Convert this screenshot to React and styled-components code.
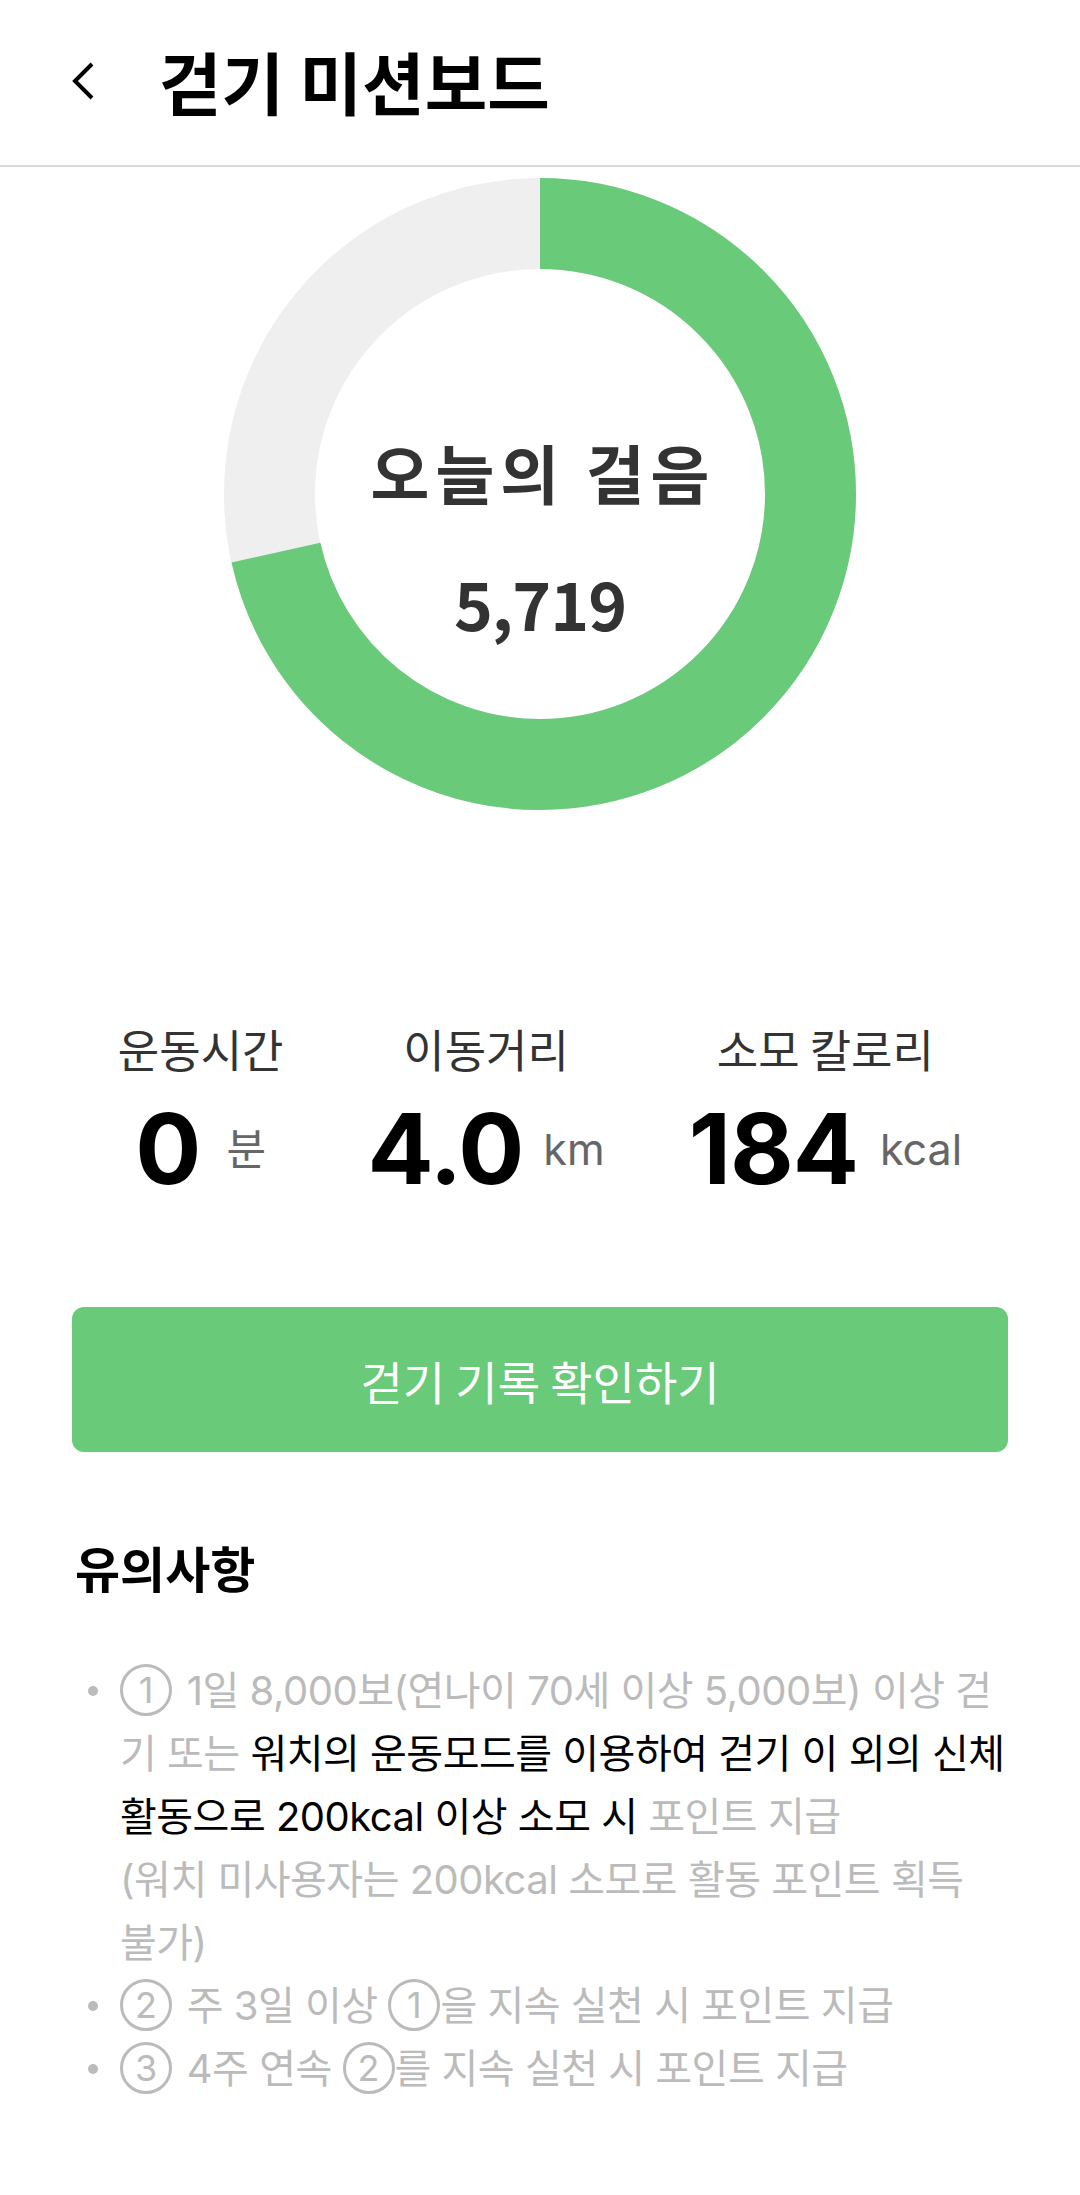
import React from "react";
import styled, { createGlobalStyle } from "styled-components";

const KR = `"Noto Sans CJK KR", "Noto Sans", sans-serif`;
const MIX = `Inter, "Noto Sans CJK KR", sans-serif`;

const GREEN = "#69ca79";
const GRAY_TEXT = "#bbbbbb";

const Global = createGlobalStyle`
  html, body { margin: 0; padding: 0; background: #ffffff; }
  body { font-family: ${KR}; -webkit-font-smoothing: antialiased; }
  * { box-sizing: border-box; }
`;

const Page = styled.div`
  width: 1080px;
  min-height: 2195px;
  background: #ffffff;
  display: flex;
  flex-direction: column;
`;

const Header = styled.header`
  height: 167px;
  display: flex;
  align-items: center;
  gap: 64px;
  padding: 0 0 4px 71px;
  border-bottom: 2px solid #d9d9d9;
`;

const BackButton = styled.button`
  border: 0;
  background: none;
  padding: 0;
  width: 24px;
  height: 40px;
  display: flex;
  cursor: pointer;
`;

const Title = styled.h1`
  margin: 0;
  font-family: ${KR};
  font-size: 68px;
  line-height: 1;
  font-weight: 700;
  color: #000000;
`;

const Main = styled.main`
  display: flex;
  flex-direction: column;
  align-items: center;
  padding: 11px 72px 0;
`;

const Donut = styled.section`
  position: relative;
  width: 632px;
  height: 632px;
`;

const Ring = styled.svg`
  position: absolute;
  inset: 0;
`;

const DonutText = styled.div`
  position: relative;
  height: 100%;
  display: flex;
  flex-direction: column;
  align-items: center;
  padding-top: 261px;
  gap: 66px;
  color: #333333;
  font-family: ${KR};
  font-weight: 700;
`;

const DonutLabel = styled.div`
  font-size: 64px;
  line-height: 1;
  letter-spacing: 6px;
  padding-left: 6px;
`;

const DonutValue = styled.div`
  font-size: 66px;
  line-height: 1;
  letter-spacing: -1px;
`;

const Stats = styled.section`
  display: flex;
  justify-content: center;
  gap: 84px;
  margin-top: 218px;
`;

const Stat = styled.div`
  display: flex;
  flex-direction: column;
  align-items: center;
  gap: 30px;
`;

const StatLabel = styled.div`
  font-family: ${KR};
  font-size: 45px;
  line-height: 42px;
  color: #333333;
`;

const StatValueRow = styled.div`
  display: flex;
  align-items: center;
  gap: ${(p) => p.$gap}px;
`;

const StatValue = styled.span`
  font-family: ${MIX};
  font-size: 98px;
  line-height: 1;
  font-weight: 700;
  color: #000000;
  letter-spacing: -1px;
`;

const StatUnit = styled.span`
  font-family: ${MIX};
  font-size: 43px;
  line-height: 1;
  color: #666666;
`;

const PrimaryButton = styled.button`
  margin-top: 109px;
  width: 936px;
  height: 145px;
  border: 0;
  border-radius: 12px;
  background: ${GREEN};
  color: #ffffff;
  font-family: ${KR};
  font-size: 46px;
  cursor: pointer;
`;

const Notice = styled.section`
  align-self: stretch;
  margin-top: 93px;
`;

const NoticeTitle = styled.h2`
  margin: 0 0 0 3px;
  font-family: ${KR};
  font-size: 49px;
  line-height: 44px;
  font-weight: 700;
  color: #000000;
`;

const List = styled.ul`
  list-style: none;
  margin: 70px 0 0;
  padding: 0;
`;

const Item = styled.li`
  display: flex;
  align-items: flex-start;
  gap: 22px;
  padding-left: 16px;
`;

const Dot = styled.span`
  flex: none;
  width: 10px;
  height: 10px;
  margin-top: 27px;
  border-radius: 50%;
  background: ${GRAY_TEXT};
`;

const ItemText = styled.p`
  margin: 0;
  flex: 1;
  font-family: ${MIX};
  font-size: 40px;
  line-height: 63px;
  letter-spacing: -0.5px;
  color: ${GRAY_TEXT};
`;

const Strong = styled.span`
  color: #000000;
`;

const Circled = styled.span`
  display: inline-flex;
  align-items: center;
  justify-content: center;
  width: 52px;
  height: 52px;
  margin-right: ${(p) => (p.$tight ? "4px" : "0")};
  border: 3px solid ${GRAY_TEXT};
  border-radius: 50%;
  font-family: ${MIX};
  font-size: 36px;
  line-height: 1;
  letter-spacing: 0;
  vertical-align: 2px;
`;

function ChevronLeft() {
  return (
    <svg width="24" height="40" viewBox="0 0 24 40" fill="none">
      <polyline
        points="21,3 4,20 21,37"
        stroke="#000"
        strokeWidth="4"
        strokeLinecap="butt"
        strokeLinejoin="miter"
      />
    </svg>
  );
}

function StepRing({ steps, goal }) {
  const r = 270.5;
  const c = 2 * Math.PI * r;
  const ratio = Math.min(steps / goal, 1);
  return (
    <Ring width="632" height="632" viewBox="0 0 632 632">
      <circle cx="316" cy="316" r={r} fill="none" stroke="#efefef" strokeWidth="91" />
      <circle
        cx="316"
        cy="316"
        r={r}
        fill="none"
        stroke={GREEN}
        strokeWidth="91"
        strokeDasharray={`${c * ratio} ${c}`}
        transform="rotate(-90 316 316)"
      />
    </Ring>
  );
}

const stats = [
  { label: "운동시간", value: "0", unit: "분", gap: 26 },
  { label: "이동거리", value: "4.0", unit: "km", gap: 20 },
  { label: "소모 칼로리", value: "184", unit: "kcal", gap: 22 },
];

export default function App() {
  return (
    <Page>
      <Global />
      <Header>
        <BackButton aria-label="뒤로가기">
          <ChevronLeft />
        </BackButton>
        <Title>걷기 미션보드</Title>
      </Header>
      <Main>
        <Donut>
          <StepRing steps={5719} goal={8000} />
          <DonutText>
            <DonutLabel>오늘의 걸음</DonutLabel>
            <DonutValue>5,719</DonutValue>
          </DonutText>
        </Donut>

        <Stats>
          {stats.map((s) => (
            <Stat key={s.label}>
              <StatLabel>{s.label}</StatLabel>
              <StatValueRow $gap={s.gap}>
                <StatValue>{s.value}</StatValue>
                <StatUnit>{s.unit}</StatUnit>
              </StatValueRow>
            </Stat>
          ))}
        </Stats>

        <PrimaryButton>걷기 기록 확인하기</PrimaryButton>

        <Notice>
          <NoticeTitle>유의사항</NoticeTitle>
          <List>
            <Item>
              <Dot />
              <ItemText>
                <Circled $tight>1</Circled> 1일 8,000보(연나이 70세 이상 5,000보) 이상 걷기 또는{" "}
                <Strong>워치의 운동모드를 이용하여 걷기 이 외의 신체 활동으로 200kcal 이상 소모 시</Strong>{" "}
                포인트 지급
                <br />
                (워치 미사용자는 200kcal 소모로 활동 포인트 획득 불가)
              </ItemText>
            </Item>
            <Item>
              <Dot />
              <ItemText>
                <Circled $tight>2</Circled> 주 3일 이상 <Circled>1</Circled>을 지속 실천 시 포인트 지급
              </ItemText>
            </Item>
            <Item>
              <Dot />
              <ItemText>
                <Circled $tight>3</Circled> 4주 연속 <Circled>2</Circled>를 지속 실천 시 포인트 지급
              </ItemText>
            </Item>
          </List>
        </Notice>
      </Main>
    </Page>
  );
}
